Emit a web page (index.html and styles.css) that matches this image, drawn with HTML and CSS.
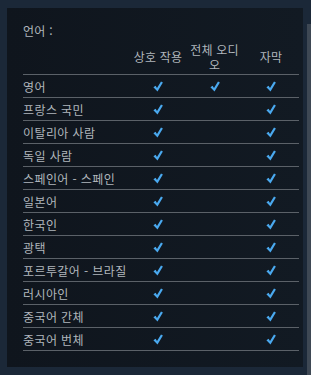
FILE: index.html
```html
<!DOCTYPE html>
<html lang="ko">
<head>
<meta charset="utf-8">
<link rel="stylesheet" href="styles.css">
</head>
<body>
<div class="page">
  <div class="panel">
    <div class="label">언어 :</div>
    <table class="langs">
      <colgroup><col class="c-name"><col class="c-a"><col class="c-b"><col class="c-c"></colgroup>
      <thead>
        <tr><th></th><th>상호 작용</th><th>전체 오디오</th><th>자막</th></tr>
      </thead>
      <tbody id="rows"></tbody>
    </table>
  </div>
  <div class="scroll"></div>
</div>
<script>
const rows = [["영어",1,1,1],["프랑스 국민",1,0,1],["이탈리아 사람",1,0,1],["독일 사람",1,0,1],["스페인어 - 스페인",1,0,1],["일본어",1,0,1],["한국인",1,0,1],["광택",1,0,1],["포르투갈어 - 브라질",1,0,1],["러시아인",1,0,1],["중국어 간체",1,0,1],["중국어 번체",1,0,1]];
const chk = '<svg class="chk" width="10" height="11" viewBox="0 0 10 11"><path d="M0.4 6.2 L2.6 4.8 L4 7 L8 0.4 L9.9 1.6 L4.5 10.5 Z" fill="#4aa9ef"/></svg>';
const tb = document.getElementById('rows');
tb.innerHTML = rows.map(r => '<tr><td class="name">' + r[0] + '</td>' + r.slice(1).map(v => '<td class="mark">' + (v ? chk : '') + '</td>').join('') + '</tr>').join('');
</script>
</body>
</html>
```
FILE: styles.css
```css
html, body { margin: 0; padding: 0; }
body {
  background: #1b2838;
  font-family: "Noto Sans CJK KR", "Noto Sans", sans-serif;
  font-size: 12px;
  color: #b0b6bc;
  width: 311px;
  height: 375px;
  overflow: hidden;
}
.page {
  position: relative;
  padding: 8px 8px 0 7px;
  height: 375px;
  box-sizing: border-box;
}
.panel {
  background: linear-gradient(to right, #0f151d, #121a23);
  width: 296px;
  height: 359px;
  box-sizing: border-box;
  padding: 15px 4px 0 16px;
}
.label {
  line-height: 16px;
  height: 16px;
  letter-spacing: 0.3px;
}
.langs {
  border-collapse: collapse;
  table-layout: fixed;
  width: 276px;
}
.c-name { width: 107px; }
.c-a { width: 56px; }
.c-b { width: 57px; }
.c-c { width: 56px; }
th {
  font-weight: normal;
  line-height: 15px;
  height: 35px;
  padding: 0 2px 0;
  vertical-align: middle;
  text-align: center;
  border-bottom: 1px solid #5b6168;
  letter-spacing: 0.2px;
}
td {
  height: 22px;
  padding: 0;
  border-bottom: 1px solid #5b6168;
  vertical-align: middle;
  line-height: 15px;
}
td.name { text-align: left; white-space: nowrap; letter-spacing: 0.4px; }
td.mark { text-align: center; }
.chk { display: block; margin: 1px auto 0; }
.scroll {
  position: absolute;
  left: 307px;
  top: 24px;
  width: 4px;
  height: 360px;
  background: #3e4854;
}
```
